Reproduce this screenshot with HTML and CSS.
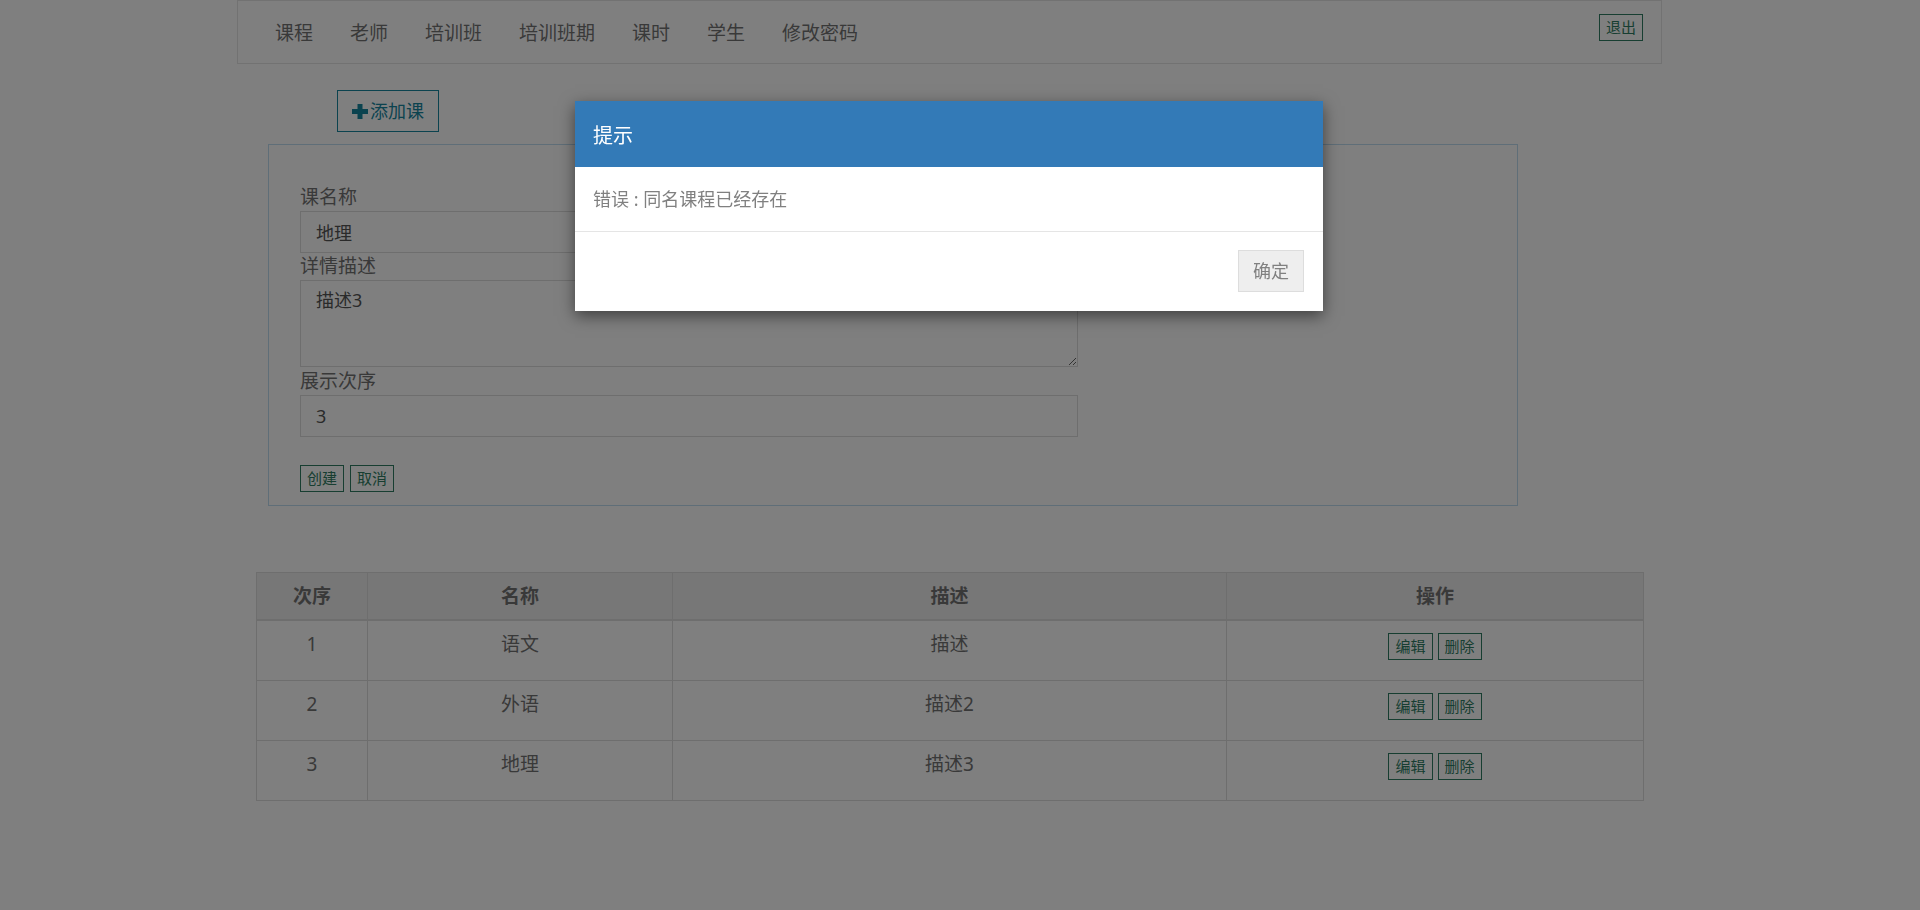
FILE: index.html
```html
<!DOCTYPE html>
<html lang="zh-CN">
<head>
<meta charset="utf-8">
<title>课程管理</title>
<link rel="stylesheet" href="styles.css">
</head>
<body>
<header class="topnav">
  <ul class="nav-links">
    <li><a href="#">课程</a></li>
    <li><a href="#">老师</a></li>
    <li><a href="#">培训班</a></li>
    <li><a href="#">培训班期</a></li>
    <li><a href="#">课时</a></li>
    <li><a href="#">学生</a></li>
    <li><a href="#">修改密码</a></li>
  </ul>
  <button class="btn-line btn-logout" type="button">退出</button>
</header>

<main class="content">
  <div class="toolbar">
    <button class="btn-add" type="button"><svg class="plus-icon" width="16" height="15" viewBox="0 0 16 15"><rect x="5.5" y="0" width="5" height="15" fill="currentColor"/><rect x="0" y="5" width="16" height="5" fill="currentColor"/></svg>添加课</button>
  </div>

  <section class="form-panel">
    <form class="course-form">
      <label class="field-label">课名称</label>
      <input class="field-input" type="text" value="地理">
      <label class="field-label">详情描述</label>
      <textarea class="field-input field-area">描述3</textarea>
      <label class="field-label field-label-last">展示次序</label>
      <input class="field-input" type="text" value="3">
      <div class="form-actions">
        <button class="btn-line" type="button">创建</button>
        <button class="btn-line" type="button">取消</button>
      </div>
    </form>
  </section>

  <table class="course-table">
    <colgroup>
      <col class="col-order">
      <col class="col-name">
      <col class="col-desc">
      <col class="col-ops">
    </colgroup>
    <thead>
      <tr><th>次序</th><th>名称</th><th>描述</th><th>操作</th></tr>
    </thead>
    <tbody>
      <tr>
        <td>1</td><td>语文</td><td>描述</td>
        <td><div class="row-actions"><button class="btn-line" type="button">编辑</button><button class="btn-line" type="button">删除</button></div></td>
      </tr>
      <tr>
        <td>2</td><td>外语</td><td>描述2</td>
        <td><div class="row-actions"><button class="btn-line" type="button">编辑</button><button class="btn-line" type="button">删除</button></div></td>
      </tr>
      <tr>
        <td>3</td><td>地理</td><td>描述3</td>
        <td><div class="row-actions"><button class="btn-line" type="button">编辑</button><button class="btn-line" type="button">删除</button></div></td>
      </tr>
    </tbody>
  </table>
</main>

<div class="backdrop"></div>
<div class="modal" role="dialog">
  <div class="modal-header">提示</div>
  <div class="modal-body">错误 : 同名课程已经存在</div>
  <div class="modal-footer"><button class="btn-ok" type="button">确定</button></div>
</div>
</body>
</html>
```

FILE: styles.css
```css
* {
  box-sizing: border-box;
}

body {
  margin: 0;
  background: #fff;
  color: #777;
  font-family: "Noto Sans", "Noto Sans CJK SC", sans-serif;
}

/* top navigation */
.topnav {
  margin-left: 237px;
  width: 1425px;
  height: 64px;
  border: 1px solid #e4e4e4;
  display: flex;
  align-items: center;
  padding: 0 18px 0 37px;
}

.nav-links {
  list-style: none;
  margin: 0;
  padding: 0;
  display: flex;
  gap: 37px;
  font-size: 19px;
  line-height: 26px;
  padding-top: 2px;
}

.nav-links a {
  color: #737373;
  text-decoration: none;
}

.btn-line {
  height: 27px;
  padding: 0 6px;
  border: 1px solid #2f7d63;
  background: transparent;
  color: #2f7d63;
  font-family: "Noto Sans", "Noto Sans CJK SC", sans-serif;
  font-size: 15px;
  line-height: 25px;
  cursor: pointer;
}

.btn-logout {
  margin-left: auto;
  align-self: flex-start;
  margin-top: 13px;
}

/* content */
.content {
  margin-left: 256px;
  width: 1387px;
  padding-top: 26px;
}

.toolbar {
  padding-left: 81px;
}

.btn-add {
  width: 102px;
  height: 42px;
  padding: 0;
  display: inline-flex;
  align-items: center;
  justify-content: center;
  gap: 2px;
  border: 1px solid #17869f;
  background: transparent;
  color: #17869f;
  font-family: "Noto Sans", "Noto Sans CJK SC", sans-serif;
  font-size: 18px;
  line-height: 26px;
}

.plus-icon {
  display: block;
}

.form-panel {
  margin: 12px 0 0 12px;
  width: 1250px;
  height: 362px;
  border: 1px solid #bedcf0;
  padding: 39px 31px 0;
}

.course-form {
  display: flex;
  flex-direction: column;
  align-items: flex-start;
}

.field-label {
  display: block;
  font-size: 19px;
  line-height: 27px;
  color: #737373;
}

.field-label-last {
  line-height: 28px;
}

.field-input {
  display: block;
  width: 778px;
  height: 42px;
  margin: 0;
  padding: 0 15px;
  border: 1px solid #dcdcdc;
  background: #fff;
  color: #555;
  font-family: "Noto Sans", "Noto Sans CJK SC", sans-serif;
  font-size: 18px;
  line-height: 26px;
}

.field-area {
  height: 87px;
  padding: 6px 15px;
}

.form-actions {
  display: flex;
  gap: 6px;
  margin-top: 28px;
}

/* table */
.course-table {
  margin-top: 66px;
  width: 1387px;
  border-collapse: collapse;
  table-layout: fixed;
  font-size: 19px;
  line-height: 26px;
  color: #737373;
  text-align: center;
}

.col-order { width: 111px; }
.col-name { width: 305px; }
.col-desc { width: 554px; }
.col-ops { width: 417px; }

.course-table th {
  background: #eee;
  border: 1px solid #ddd;
  border-bottom-width: 2px;
  padding: 10px 8px;
  font-weight: bold;
}

.course-table td {
  border: 1px solid #ddd;
  padding: 10px 8px 20px;
  vertical-align: top;
}

.row-actions {
  display: flex;
  justify-content: center;
  gap: 5px;
  height: 29px;
  padding-top: 2px;
}

.row-actions .btn-line {
  padding: 0 6px;
}

/* modal */
.backdrop {
  position: fixed;
  inset: 0;
  background: rgba(0, 0, 0, 0.5);
}

.modal {
  position: absolute;
  left: 575px;
  top: 101px;
  width: 748px;
  background: #fff;
  box-shadow: 0 5px 15px rgba(0, 0, 0, 0.5);
}

.modal-header {
  height: 66px;
  padding: 0 18px;
  display: flex;
  align-items: center;
  background: #337ab7;
  color: #fff;
  font-size: 20px;
}

.modal-body {
  padding: 19px 18px;
  font-size: 18px;
  line-height: 26px;
  color: #808080;
}

.modal-footer {
  border-top: 1px solid #e5e5e5;
  padding: 18px 19px 19px;
  display: flex;
  justify-content: flex-end;
}

.btn-ok {
  height: 42px;
  padding: 0 14px;
  background: #eee;
  border: 1px solid #ddd;
  color: #808080;
  font-family: "Noto Sans", "Noto Sans CJK SC", sans-serif;
  font-size: 18px;
  line-height: 26px;
}
```
